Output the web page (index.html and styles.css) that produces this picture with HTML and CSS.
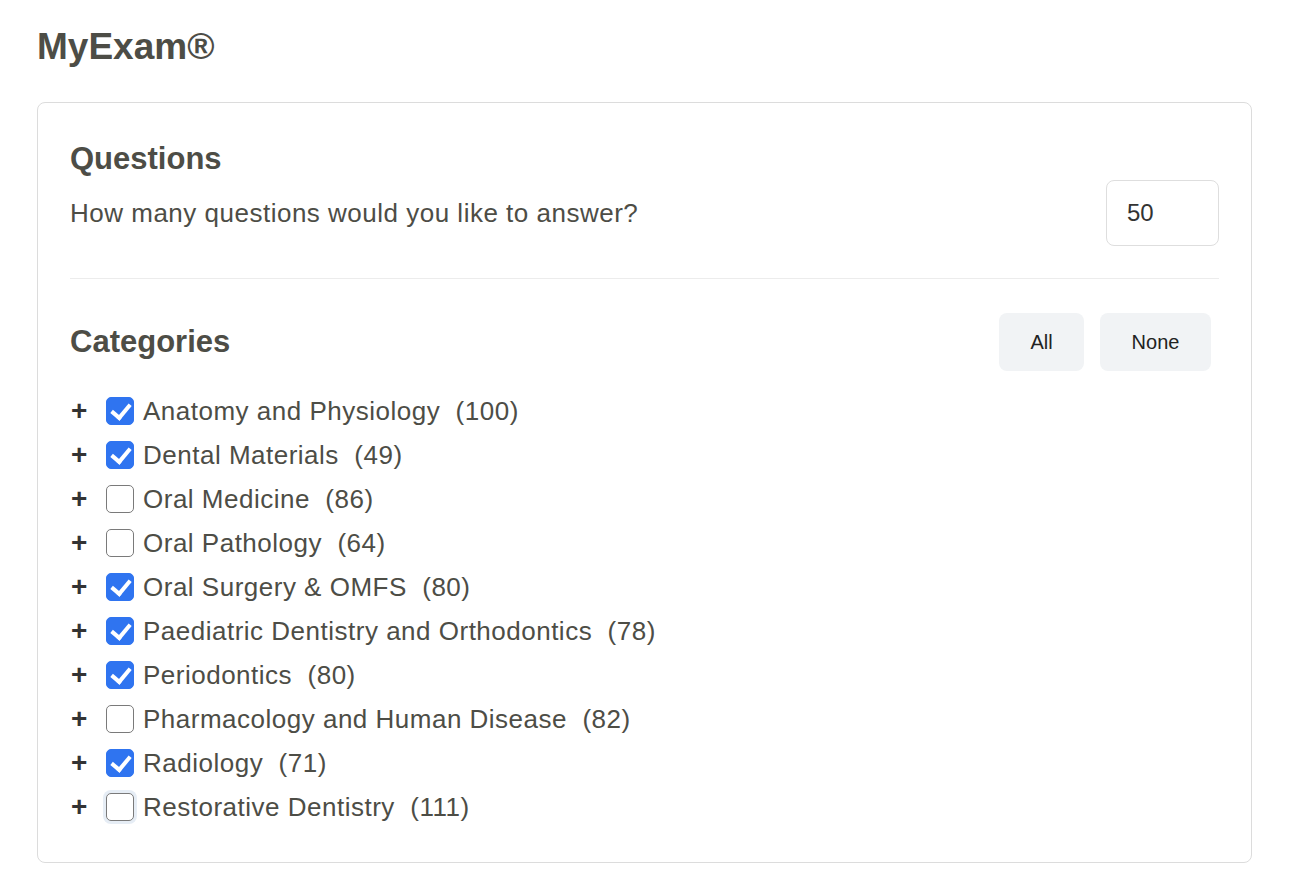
FILE: index.html
```html
<!DOCTYPE html>
<html>
<head>
<meta charset="utf-8">
<link rel="stylesheet" href="styles.css">
</head>
<body>
<div class="page">
  <h1 class="title">MyExam®</h1>
  <div class="card">
    <h2 class="heading">Questions</h2>
    <div class="qrow">
      <span class="qtext">How many questions would you like to answer?</span>
      <input class="qinput" type="text" value="50">
    </div>
    <hr class="divider">
    <div class="cathead">
      <h2 class="heading">Categories</h2>
      <div class="btns">
        <button class="btn btn-all">All</button>
        <button class="btn btn-none">None</button>
      </div>
    </div>
    <ul class="cats">
      <li class="cat"><span class="plus">+</span><span class="cb on"></span><span class="lbl">Anatomy and Physiology&nbsp; (100)</span></li>
      <li class="cat"><span class="plus">+</span><span class="cb on"></span><span class="lbl">Dental Materials&nbsp; (49)</span></li>
      <li class="cat"><span class="plus">+</span><span class="cb"></span><span class="lbl">Oral Medicine&nbsp; (86)</span></li>
      <li class="cat"><span class="plus">+</span><span class="cb"></span><span class="lbl">Oral Pathology&nbsp; (64)</span></li>
      <li class="cat"><span class="plus">+</span><span class="cb on"></span><span class="lbl">Oral Surgery &amp; OMFS&nbsp; (80)</span></li>
      <li class="cat"><span class="plus">+</span><span class="cb on"></span><span class="lbl">Paediatric Dentistry and Orthodontics&nbsp; (78)</span></li>
      <li class="cat"><span class="plus">+</span><span class="cb on"></span><span class="lbl">Periodontics&nbsp; (80)</span></li>
      <li class="cat"><span class="plus">+</span><span class="cb"></span><span class="lbl">Pharmacology and Human Disease&nbsp; (82)</span></li>
      <li class="cat"><span class="plus">+</span><span class="cb on"></span><span class="lbl">Radiology&nbsp; (71)</span></li>
      <li class="cat"><span class="plus">+</span><span class="cb focus"></span><span class="lbl">Restorative Dentistry&nbsp; (111)</span></li>
    </ul>
  </div>
</div>
</body>
</html>
```
FILE: styles.css
```css
* { box-sizing: border-box; }
body {
  margin: 0;
  background: #fff;
  font-family: "Liberation Sans", Arial, sans-serif;
  color: #4d4d46;
}
.page {
  padding: 22px 38px 0 37px;
}
.title {
  margin: 0 0 30px 0;
  font-size: 37px;
  font-weight: bold;
  line-height: 50px;
  color: #4d4d46;
}
.card {
  border: 1px solid #dcdcdc;
  border-radius: 8px;
  padding: 36px 32px 33px 32px;
}
.heading {
  margin: 0;
  font-size: 31px;
  font-weight: bold;
  line-height: 40px;
  color: #4d4d46;
}
.qrow {
  display: flex;
  align-items: center;
  justify-content: space-between;
  margin-top: 1px;
}
.qtext {
  font-size: 26px;
  letter-spacing: 0.5px;
}
.qinput {
  width: 113px;
  height: 66px;
  border: 1px solid #dedede;
  border-radius: 8px;
  padding: 0 20px;
  font-family: "Liberation Sans", Arial, sans-serif;
  font-size: 24px;
  color: #333;
  outline: none;
}
.divider {
  border: 0;
  border-top: 1px solid #ececec;
  margin: 32px 0 34px 0;
}
.cathead {
  display: flex;
  align-items: center;
  justify-content: space-between;
}
.btns {
  display: flex;
  gap: 16px;
  margin-right: 8px;
}
.btn {
  height: 58px;
  border: 0;
  border-radius: 8px;
  background: #f1f3f5;
  font-family: "Liberation Sans", Arial, sans-serif;
  font-size: 20px;
  color: #222;
  padding: 0;
}
.btn-all { width: 85px; }
.btn-none { width: 111px; }
.cats {
  list-style: none;
  margin: 18px 0 0 0;
  padding: 0;
}
.cat {
  display: flex;
  align-items: center;
  height: 44px;
}
.plus {
  width: 36px;
  font-size: 28px;
  font-weight: bold;
  color: #333;
  line-height: 1;
  padding-left: 1px;
}
.cb {
  width: 28px;
  height: 28px;
  border: 1.5px solid #7a7a7a;
  border-radius: 5px;
  background: #fff;
  margin-right: 9px;
  position: relative;
  flex: none;
}
.cb.on {
  background: #2f74f0;
  border-color: #2f74f0;
}
.cb.on::after {
  content: "";
  position: absolute;
  left: 8px;
  top: 2px;
  width: 8px;
  height: 15px;
  border-right: 4px solid #fff;
  border-bottom: 4px solid #fff;
  transform: rotate(40deg);
}
.cb.focus {
  box-shadow: 0 0 0 3px #e6edf5;
}
.lbl {
  font-size: 26px;
  letter-spacing: 0.5px;
  white-space: pre;
}
```
